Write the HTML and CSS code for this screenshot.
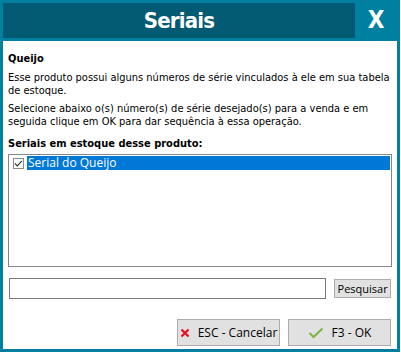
FILE: index.html
```html
<!DOCTYPE html>
<html lang="pt-BR">
<head>
  <meta charset="UTF-8" />
  <title>Seriais</title>
  <link rel="stylesheet" href="styles.css">
</head>
<body>

  <div class="window">
    <!-- Title bar -->
    <div class="titlebar">
      <div class="title">Seriais</div>
      <div class="close">X</div>
    </div>

    <div class="content">
      <p class="product">Queijo</p>
      <p class="info">Esse produto possui alguns números de série vinculados à ele em sua tabela de estoque.</p>
      <p class="info second">Selecione abaixo o(s) número(s) de série desejado(s) para a venda e em seguida clique em OK para dar sequência à essa operação.</p>

      <p class="label">Seriais em estoque desse produto:</p>
      <div class="list">
        <div class="item">
          <span class="check">
            <svg width="11" height="11" viewBox="0 0 11 11">
              <rect x="0.5" y="0.5" width="10" height="10" fill="#fff" stroke="#8a8a8a"/>
              <path d="M2 5.5 L4.3 7.8 L9 2.8" fill="none" stroke="#333" stroke-width="1.2"/>
            </svg>
          </span>
          <span class="item-text selected">Serial do Queijo</span>
        </div>
      </div>

      <div class="search">
        <input type="text" class="search-input" />
        <button class="btn-small">Pesquisar</button>
      </div>

      <div class="actions">
        <button class="btn">
          <svg width="10" height="10" viewBox="0 0 10 10">
            <path d="M1.5 1.5 L8.5 8.5 M8.5 1.5 L1.5 8.5" stroke="#e81123" stroke-width="2.2"/>
          </svg>
          ESC - Cancelar
        </button>
        <button class="btn">
          <svg width="16" height="12" viewBox="0 0 16 12">
            <path d="M1.5 6 L5.5 10 L14.5 1.5" fill="none" stroke="#7cb342" stroke-width="2"/>
          </svg>
          F3 - OK
        </button>
      </div>
    </div>
  </div>

</body>
</html>
```

FILE: styles.css
```css
* { box-sizing: border-box; margin: 0; padding: 0; }
body { background: #fff; font-family: Tahoma, "DejaVu Sans", sans-serif; }

.window { width: 400px; height: 352px; border: 3px solid #0080a0; background: #0080a0; display: flex; flex-direction: column; }

/* Title bar */
.titlebar { display: flex; height: 38px; }
.title { flex: 1; height: 35px; background: #025a73; color: #fff; text-align: center; font-family: "DejaVu Sans Condensed", sans-serif; font-weight: bold; font-size: 22px; letter-spacing: -0.8px; line-height: 35px; }
.close { width: 42px; height: 35px; color: #fff; text-align: center; font-family: "DejaVu Sans Condensed", sans-serif; font-weight: bold; font-size: 24px; line-height: 35px; }

/* Body */
.content { flex: 1; background: #fff; padding: 11px 6px 0 5px; color: #000; font-size: 11px; line-height: 13px; font-family: "DejaVu Sans Condensed", sans-serif; }
.product { font-weight: bold; margin-bottom: 6px; }
.info.second { margin-top: 5px; }
.label { font-weight: bold; margin-top: 9px; }

.list { margin-top: 4px; width: 384px; height: 113px; border: 1px solid #828790; padding: 1px 1px 0 4px; }
.item { display: flex; align-items: center; height: 14px; }
.check { display: flex; width: 14px; }
.item-text { flex: 1; height: 14px; padding-left: 1px; font-family: "Open Sans", sans-serif; font-size: 12px; line-height: 14px; }
.selected { background: #0078d7; color: #fff; }

.search { display: flex; align-items: flex-start; gap: 8px; margin-top: 11px; margin-left: 1px; }
.search-input { width: 319px; height: 21px; border: 1px solid #7a7a7a; }
.btn-small { margin-top: 1px; width: 57px; height: 19px; background: #e1e1e1; border: 1px solid #adadad; font-family: "Open Sans", sans-serif; font-size: 11px; color: #000; }

.actions { display: flex; justify-content: flex-end; gap: 8px; margin-top: 20px; }
.btn { display: flex; align-items: center; justify-content: center; gap: 8px; width: 103px; height: 27px; background: #e1e1e1; border: 1px solid #adadad; font-family: "Open Sans", sans-serif; font-size: 12px; color: #000; }
```
